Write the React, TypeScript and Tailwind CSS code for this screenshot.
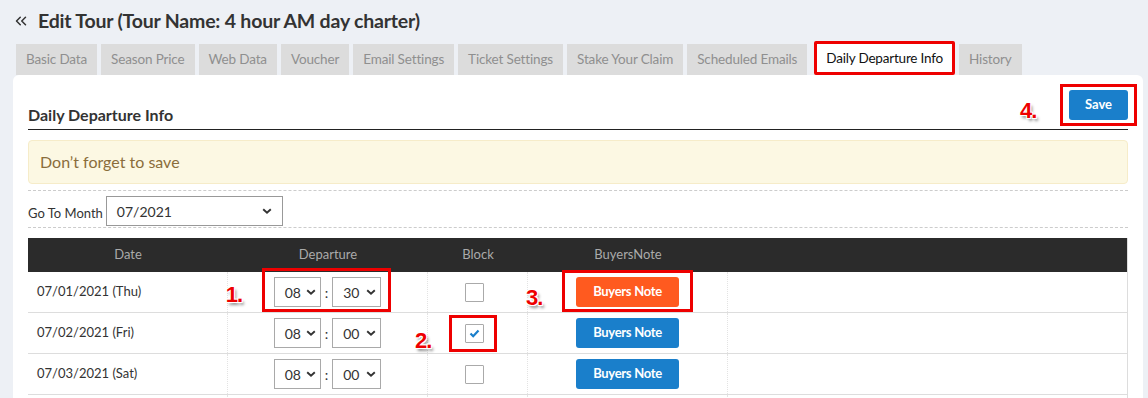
import { ChevronsLeft } from "lucide-react";

const tabs = [
  "Basic Data",
  "Season Price",
  "Web Data",
  "Voucher",
  "Email Settings",
  "Ticket Settings",
  "Stake Your Claim",
  "Scheduled Emails",
  "Daily Departure Info",
  "History",
];

const rows = [
  { date: "07/01/2021 (Thu)", hour: "08", min: "30", blocked: false, hot: true },
  { date: "07/02/2021 (Fri)", hour: "08", min: "00", blocked: true, hot: false },
  { date: "07/03/2021 (Sat)", hour: "08", min: "00", blocked: false, hot: false },
];

function Chevron() {
  return (
    <svg width="10" height="6" viewBox="0 0 10 6" className="shrink-0">
      <path d="M1.2 1.2 L5 4.7 L8.8 1.2" fill="none" stroke="#333" strokeWidth="1.9" />
    </svg>
  );
}

function Marker({ n, className }: { n: string; className: string }) {
  return (
    <span
      className={`absolute font-['Liberation_Sans',sans-serif] text-[22px] leading-none font-bold tracking-[-1px] text-[#e00] [text-shadow:1px_1px_0_#fff,-1px_-1px_0_#fff,1px_-1px_0_#fff,-1px_1px_0_#fff,2px_3px_3px_rgba(0,0,0,0.45)] ${className}`}
    >
      {n}
    </span>
  );
}

function TimeSelect({ value, width }: { value: string; width: string }) {
  return (
    <div
      className={`flex items-center justify-between h-[30px] ${width} border border-[#a9a9a9] bg-white pl-[10px] pr-[4px] text-[14px] text-[#333]`}
    >
      <span>{value}</span>
      <Chevron />
    </div>
  );
}

function Checkbox({ checked }: { checked: boolean }) {
  return (
    <div className="flex items-center justify-center w-[19px] h-[19px] border border-[#aaa] bg-white rounded-[1px]">
      {checked && (
        <svg width="11" height="9" viewBox="0 0 11 9">
          <path d="M1.5 4.5 L4.2 7.2 L9.5 1.5" fill="none" stroke="#1a7fcb" strokeWidth="2.2" />
        </svg>
      )}
    </div>
  );
}

export default function App() {
  return (
    <div className="min-h-[398px] h-[398px] overflow-hidden bg-[#edf0f5] font-['Lato','Open_Sans',sans-serif] pl-[13px] pt-[9px]">
      {/* Title */}
      <div className="flex items-center gap-[8px] h-[24px] text-[#333]">
        <ChevronsLeft size={18} strokeWidth={2} className="-ml-[1px]" />
        <h1 className="text-[19.5px] font-bold tracking-[-0.2px]">Edit Tour (Tour Name: 4 hour AM day charter)</h1>
      </div>

      {/* Tabs */}
      <div className="flex items-end gap-[4px] mt-[9px] ml-[3px] h-[33px]">
        {tabs.map((t) =>
          t === "Daily Departure Info" ? (
            <div
              key={t}
              className="h-[34px] flex items-center px-[9px] ml-[3px] bg-white border-[3px] border-[#e00] rounded-[2px] text-[13.5px] text-[#111] tracking-[-0.2px]"
            >
              {t}
            </div>
          ) : (
            <div
              key={t}
              className="h-[31px] flex items-center px-[10px] bg-[#dcdcdc] text-[13.5px] text-[#8f8f8f] tracking-[-0.15px]"
            >
              {t}
            </div>
          )
        )}
      </div>

      {/* Panel */}
      <div className="w-[1130px] bg-white rounded-t-[6px] px-[15px] pb-[20px]">
        <div className="relative flex justify-between items-start h-[55px] pt-[15px] border-b border-[#222]">
          <h2 className="self-end mb-[4px] text-[16px] leading-[20px] font-bold text-[#333]">Daily Departure Info</h2>
          <div className="relative">
            <button className="w-[59px] h-[30px] rounded-[3px] bg-[#1a7fcb] text-white text-[13px] font-bold">
              Save
            </button>
            <div className="absolute -left-[9px] -right-[9px] -top-[6px] -bottom-[6px] border-[3px] border-[#e00]" />
            <Marker n="4." className="-left-[49px] top-[10px]" />
          </div>
        </div>

        <div className="mt-[10px] h-[44px] flex items-center pl-[11px] rounded-[4px] bg-[#fcf8e3] border border-[#f6ecc9] text-[16px] text-[#8a6d3b]">
          Don’t forget to save
        </div>

        <div className="mt-[6px] border-t border-dashed border-[#ccc] pt-[5px] flex items-end border-b pb-[1px]">
          <span className="text-[13px] text-[#333] mr-[3px] mb-[3px]">Go To Month</span>
          <div className="flex items-center justify-between w-[177px] h-[30px] border border-[#999] pl-[10px] pr-[10px] text-[14px] text-[#333]">
            <span>07/2021</span>
            <Chevron />
          </div>
        </div>

        {/* Table */}
        <div className="mt-[10px] border-r border-[#ddd]">
          <div className="grid grid-cols-[200px_200px_100px_200px_1fr] h-[34px] bg-[#2b2b2b] text-[13px] text-[#aaa] items-center text-center">
            <div>Date</div>
            <div>Departure</div>
            <div>Block</div>
            <div>BuyersNote</div>
            <div />
          </div>
          {rows.map((r, i) => (
            <div
              key={r.date}
              className="grid grid-cols-[200px_200px_100px_200px_1fr] h-[41px] border-b border-[#ddd] text-[13px] text-[#333]"
            >
              <div className="flex items-center pl-[9px] border-r border-dotted border-[#e3e3e3]">{r.date}</div>
              <div className="flex items-center justify-center border-r border-dotted border-[#e3e3e3]">
                <div className="relative flex items-center gap-[4px]">
                  <TimeSelect value={r.hour} width="w-[47px]" />
                  <span className="text-[14px]">:</span>
                  <TimeSelect value={r.min} width="w-[49px]" />
                  {i === 0 && (
                    <>
                      <div className="absolute -left-[12px] -right-[10px] -top-[9px] -bottom-[5px] border-[3px] border-[#e00]" />
                      <Marker n="1." className="-left-[48px] top-[7px]" />
                    </>
                  )}
                </div>
              </div>
              <div className="flex items-center justify-center pr-[6px] border-r border-dotted border-[#e3e3e3]">
                <div className="relative">
                  <Checkbox checked={r.blocked} />
                  {i === 1 && (
                    <>
                      <div className="absolute -left-[16px] -right-[13px] -top-[9px] -bottom-[9px] border-[3px] border-[#e00]" />
                      <Marker n="2." className="-left-[50px] top-[6px]" />
                    </>
                  )}
                </div>
              </div>
              <div className="flex items-center justify-center border-r border-dotted border-[#e3e3e3]">
                <div className="relative">
                  <button
                    className={`w-[103px] h-[30px] rounded-[3px] text-white text-[13px] font-bold tracking-[-0.3px] ${
                      r.hot ? "bg-[#ff5a1f]" : "bg-[#1a7fcb]"
                    }`}
                  >
                    Buyers Note
                  </button>
                  {i === 0 && (
                    <>
                      <div className="absolute -left-[14px] -right-[14px] -top-[7px] -bottom-[5px] border-[3px] border-[#e00]" />
                      <Marker n="3." className="-left-[50px] top-[10px]" />
                    </>
                  )}
                </div>
              </div>
              <div />
            </div>
          ))}
          <div className="grid grid-cols-[200px_200px_100px_200px_1fr] h-[20px]">
            <div className="border-r border-dotted border-[#e3e3e3]" />
            <div className="border-r border-dotted border-[#e3e3e3]" />
            <div className="border-r border-dotted border-[#e3e3e3]" />
            <div className="border-r border-dotted border-[#e3e3e3]" />
            <div />
          </div>
        </div>
      </div>
    </div>
  );
}
